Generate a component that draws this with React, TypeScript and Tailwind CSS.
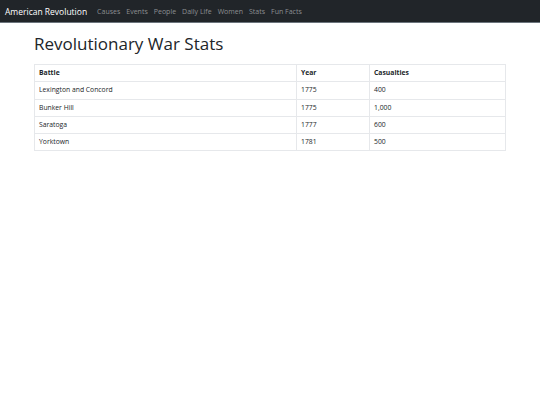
const links = ["Causes", "Events", "People", "Daily Life", "Women", "Stats", "Fun Facts"];

const battles = [
  { name: "Lexington and Concord", year: "1775", casualties: "400" },
  { name: "Bunker Hill", year: "1775", casualties: "1,000" },
  { name: "Saratoga", year: "1777", casualties: "600" },
  { name: "Yorktown", year: "1781", casualties: "500" },
];

export default function App() {
  return (
    <div className="min-h-screen bg-white text-[#212529] font-['Open_Sans',sans-serif]">
      <nav className="flex h-[23px] items-center border-b border-[#6c757d] bg-[#212529] pl-[5px] pt-[3px]">
        <span className="mr-[10px] text-[8.5px] text-white">American Revolution</span>
        <ul className="flex gap-[6px] text-[7px] text-[#8c8f92]">
          {links.map((link) => (
            <li key={link}>{link}</li>
          ))}
        </ul>
      </nav>

      <main className="px-[34px] pt-[10.5px]">
        <h1 className="mb-[10.5px] text-[17px] leading-[20px]">Revolutionary War Stats</h1>

        <table className="w-[472px] border-collapse text-[6.8px]">
          <thead>
            <tr className="h-[17.3px]">
              <th className="w-[262px] border border-[#e6e8eb] px-[4px] text-left font-bold">Battle</th>
              <th className="w-[73px] border border-[#e6e8eb] px-[4px] text-left font-bold">Year</th>
              <th className="border border-[#e6e8eb] px-[4px] text-left font-bold">Casualties</th>
            </tr>
          </thead>
          <tbody>
            {battles.map((b) => (
              <tr key={b.name} className="h-[17.3px]">
                <td className="border border-[#e6e8eb] px-[4px]">{b.name}</td>
                <td className="border border-[#e6e8eb] px-[4px]">{b.year}</td>
                <td className="border border-[#e6e8eb] px-[4px]">{b.casualties}</td>
              </tr>
            ))}
          </tbody>
        </table>
      </main>
    </div>
  );
}
